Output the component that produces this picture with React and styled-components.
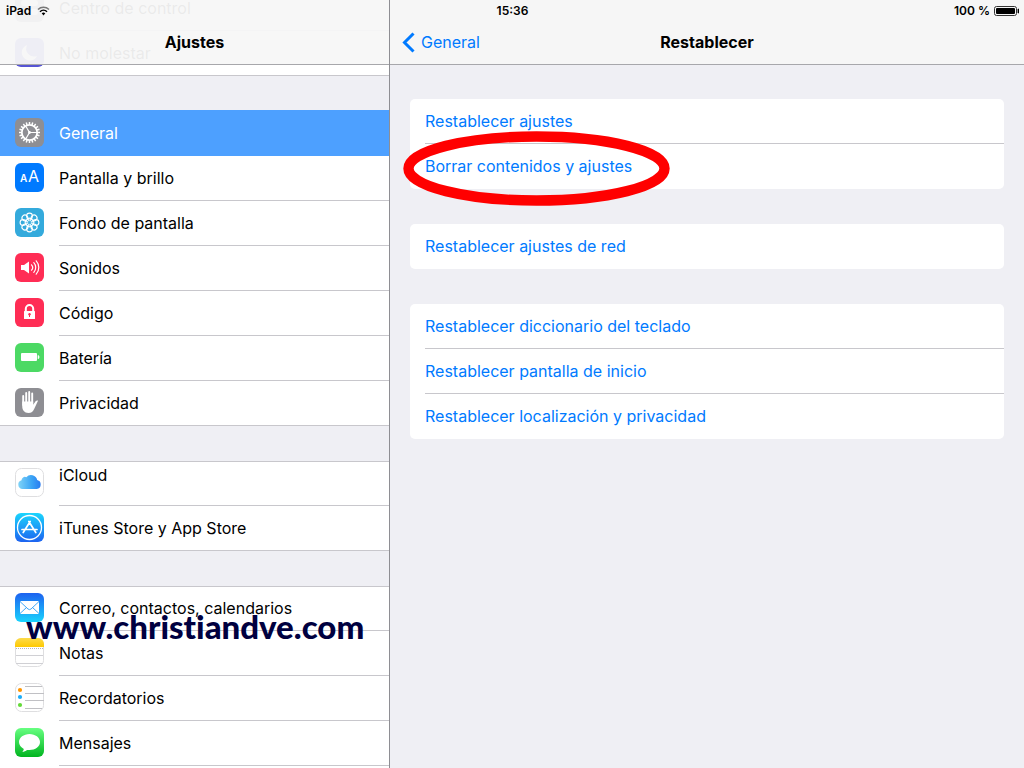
import React from 'react';
import styled, { createGlobalStyle, css } from 'styled-components';

const rootRows = [
  { id: 'control', label: 'Centro de control' },
  { id: 'dnd', label: 'No molestar' },
];

const generalRows = [
  { id: 'general', label: 'General', selected: true },
  { id: 'display', label: 'Pantalla y brillo' },
  { id: 'wallpaper', label: 'Fondo de pantalla' },
  { id: 'sounds', label: 'Sonidos' },
  { id: 'passcode', label: 'Código' },
  { id: 'battery', label: 'Batería' },
  { id: 'privacy', label: 'Privacidad' },
];

const storeRows = [
  { id: 'icloud', label: 'iCloud', raised: true },
  { id: 'appstore', label: 'iTunes Store y App Store' },
];

const appRows = [
  { id: 'mail', label: 'Correo, contactos, calendarios' },
  { id: 'notes', label: 'Notas' },
  { id: 'reminders', label: 'Recordatorios' },
  { id: 'messages', label: 'Mensajes' },
];

const sidebarGroups = [
  { rows: rootRows },
  { rows: generalRows },
  { rows: storeRows },
  { rows: appRows, open: true },
];

const resetGroups = [
  [{ label: 'Restablecer ajustes' }, { label: 'Borrar contenidos y ajustes', marked: true }],
  [{ label: 'Restablecer ajustes de red' }],
  [
    { label: 'Restablecer diccionario del teclado' },
    { label: 'Restablecer pantalla de inicio' },
    { label: 'Restablecer localización y privacidad' },
  ],
];

const petals = [0, 45, 90, 135, 180, 225, 270, 315];
const teeth = Array.from({ length: 20 }, (_, i) => i * 18);

const glyphs = {
  control: (
    <>
      <rect width="29" height="29" rx="6" fill="#8e8e93" />
      <rect x="6" y="7" width="17" height="6" rx="3" fill="#fff" />
      <rect x="6" y="16" width="17" height="6" rx="3" fill="#fff" />
    </>
  ),
  dnd: (
    <>
      <rect width="29" height="29" rx="6" fill="#5654d4" />
      <path d="M12 7a8 8 0 1 0 10 11A8 8 0 0 1 12 7z" fill="#fff" />
    </>
  ),
  general: (
    <>
      <rect width="29" height="29" rx="6" fill="#8e8e93" />
      <circle cx="14.5" cy="14.5" r="7.7" fill="none" stroke="#fff" strokeWidth="1.8" />
      {teeth.map((a) => (
        <path key={a} d="M14.5 4v2.6" stroke="#fff" strokeWidth="1.5" transform={`rotate(${a} 14.5 14.5)`} />
      ))}
      <path d="M14.5 14.5h7.5M14.5 14.5l-3.8-6.5M14.5 14.5l-3.8 6.5" stroke="#fff" strokeWidth="1.2" />
      <circle cx="14.5" cy="14.5" r="1.4" fill="#fff" />
    </>
  ),
  display: (
    <>
      <rect width="29" height="29" rx="6" fill="#007aff" />
      <text x="5" y="19" fill="#fff" fontSize="10" fontWeight="600" fontFamily="Inter, sans-serif">A</text>
      <text x="13" y="19" fill="#fff" fontSize="16" fontWeight="400" fontFamily="Inter, sans-serif">A</text>
    </>
  ),
  wallpaper: (
    <>
      <rect width="29" height="29" rx="6" fill="#34aadc" />
      <g fill="none" stroke="#fff" strokeWidth="1.1">
        {petals.map((a) => (
          <circle key={a} cx="14.5" cy="8" r="2.9" transform={`rotate(${a} 14.5 14.5)`} />
        ))}
        {petals.map((a) => (
          <circle key={a} cx="14.5" cy="11.3" r="1.4" strokeWidth="0.7" transform={`rotate(${a} 14.5 14.5)`} />
        ))}
      </g>
    </>
  ),
  sounds: (
    <>
      <rect width="29" height="29" rx="6" fill="#ff2d55" />
      <path d="M6 12h3l5-3.500v12L9 17H6z" fill="#fff" />
      <g fill="none" stroke="#fff" strokeWidth="1.2" strokeLinecap="round">
        <path d="M16.5 11.800a4 4 0 0 1 0 5.400" />
        <path d="M18.800 9.700a7 7 0 0 1 0 9.600" />
        <path d="M21.200 7.800a10 10 0 0 1 0 13.400" />
      </g>
    </>
  ),
  passcode: (
    <>
      <rect width="29" height="29" rx="6" fill="#ff2d55" />
      <path d="M10.800 14v-3.300a3.700 3.700 0 0 1 7.400 0V14" fill="none" stroke="#fff" strokeWidth="2" />
      <rect x="9" y="13" width="11" height="8" rx="0.5" fill="#fff" />
      <circle cx="14.5" cy="16.2" r="1.2" fill="#ff2d55" />
      <path d="M14.500 16v3" stroke="#ff2d55" strokeWidth="1" />
    </>
  ),
  battery: (
    <>
      <rect width="29" height="29" rx="6" fill="#4cd964" />
      <rect x="6" y="10" width="16" height="8" rx="1" fill="#fff" />
      <path d="M23 12.300a2 2 0 0 1 0 3.600z" fill="#fff" stroke="#fff" strokeWidth="0.6" />
    </>
  ),
  privacy: (
    <>
      <rect width="29" height="29" rx="6" fill="#8e8e93" />
      <g stroke="#fff" strokeLinecap="round" strokeWidth="1.9" fill="none">
        <path d="M8.200 8v9M11.200 5v10M14.200 4v11M17.200 5.500v10" />
      </g>
      <path d="M7.250 13.500H18.200v3.200l2.600-3.600c.8-.9 2-.8 2.200-.3l-3.600 7.600c-1.300 2.900-3 4.600-5.900 4.600-4.200 0-6.250-3-6.250-6.500z" fill="#fff" />
    </>
  ),
  icloud: (
    <>
      <defs>
        <linearGradient id="cloud" x1="0" y1="0" x2="1" y2="0">
          <stop offset="0" stopColor="#7fd3f7" />
          <stop offset="0.6" stopColor="#3ba4f5" />
          <stop offset="1" stopColor="#2a7bf0" />
        </linearGradient>
      </defs>
      <rect x="0.5" y="0.5" width="28" height="28" rx="6" fill="#fff" stroke="#dedee0" />
      <path
        d="M7.500 21a4.500 4.500 0 0 1-1-8.800 3.400 3.400 0 0 1 4.800-3A6.300 6.300 0 0 1 22.200 12 4.600 4.600 0 0 1 21.800 21z"
        fill="url(#cloud)"
      />
    </>
  ),
  appstore: (
    <>
      <defs>
        <linearGradient id="store" x1="0" y1="0" x2="0" y2="1">
          <stop offset="0" stopColor="#1ad5fd" />
          <stop offset="1" stopColor="#1d63f0" />
        </linearGradient>
      </defs>
      <rect width="29" height="29" rx="6" fill="url(#store)" />
      <circle cx="14.5" cy="14.5" r="12" fill="none" stroke="#fff" strokeWidth="1.3" />
      <g stroke="#fff" strokeWidth="1.7" strokeLinecap="round" fill="none">
        <path d="M13.800 8.500l7 11M15.200 8.500l-7 11M7 16.500h15" />
      </g>
    </>
  ),
  mail: (
    <>
      <defs>
        <linearGradient id="mail" x1="0" y1="0" x2="0" y2="1">
          <stop offset="0" stopColor="#1d62f0" />
          <stop offset="1" stopColor="#19d3fd" />
        </linearGradient>
      </defs>
      <rect width="29" height="29" rx="6" fill="url(#mail)" />
      <rect x="5" y="8" width="19" height="13" rx="1" fill="#fff" />
      <path d="M5 8.500l8 7.500q1.500 1.300 3 0l8-7.500M5 20.500l6.500-6M24 20.500l-6.500-6" fill="none" stroke="#2a9df5" strokeWidth="0.9" />
    </>
  ),
  notes: (
    <>
      <defs>
        <linearGradient id="notes" x1="0" y1="0" x2="0" y2="1">
          <stop offset="0" stopColor="#fddb4a" />
          <stop offset="1" stopColor="#fec901" />
        </linearGradient>
      </defs>
      <rect x="0.5" y="0.5" width="28" height="28" rx="6" fill="#fff" stroke="#dedee0" />
      <path d="M0 9V6a6 6 0 0 1 6-6h17a6 6 0 0 1 6 6v3z" fill="url(#notes)" />
      <path d="M1 10.500h27" stroke="#b5b5b5" strokeDasharray="1 1" />
      <path d="M1 17.500h27M1 25.500h27" stroke="#d0d0d4" />
    </>
  ),
  reminders: (
    <>
      <rect x="0.5" y="0.5" width="28" height="28" rx="6" fill="#fff" stroke="#dedee0" />
      <path d="M10 3.500h17M10 10.500h19M10 17.500h19M10 25.500h17" stroke="#c0c0c4" />
      <circle cx="5" cy="7" r="2.1" fill="#ff9500" />
      <circle cx="5" cy="14" r="2.1" fill="#1badf8" />
      <circle cx="5" cy="22" r="2.1" fill="#63da38" />
    </>
  ),
  messages: (
    <>
      <defs>
        <linearGradient id="messages" x1="0" y1="0" x2="0" y2="1">
          <stop offset="0" stopColor="#67ff81" />
          <stop offset="1" stopColor="#01b41f" />
        </linearGradient>
      </defs>
      <rect width="29" height="29" rx="6" fill="url(#messages)" />
      <path d="M14.500 6C8.700 6 4 9.600 4 14.100c0 2.900 1.900 5.400 4.800 6.900-.1 1-.6 2-1.500 2.800 1.900-.1 3.500-.8 4.700-1.900.8.200 1.700.2 2.500.2 5.800 0 10.500-3.500 10.500-8S20.300 6 14.500 6z" fill="#fff" />
    </>
  ),
};

const App = () => {
  return (
    <>
      <GlobalStyle />
      <Screen>
        <StatusBar>
          <Carrier>
            iPad
            <svg width="13" height="10" viewBox="0 0 13 10" aria-hidden="true">
              <g fill="none" stroke="#000" strokeWidth="1.5">
                <path d="M1 3.500a8 8 0 0 1 11 0" stroke="#777" />
                <path d="M3 5.700a5 5 0 0 1 7 0" />
              </g>
              <path d="M4.700 7.300a2.600 2.600 0 0 1 3.600 0L6.500 9.500z" />
            </svg>
          </Carrier>
          <time>15:36</time>
          <Charge>
            100 %
            <svg width="25" height="10" viewBox="0 0 25 10" aria-hidden="true">
              <rect x="0.5" y="0.5" width="22" height="9" rx="2" fill="none" stroke="#333" />
              <rect x="2" y="2" width="19" height="6" rx="1" />
              <path d="M24 3a2 2 0 0 1 0 4z" stroke="#000" strokeWidth="0.8" />
            </svg>
          </Charge>
        </StatusBar>

        <Sidebar>
          <SidebarBar>
            <Title>Ajustes</Title>
          </SidebarBar>
          <List>
            {sidebarGroups.map(({ rows, open }) => (
              <Group key={rows[0].id} $open={open}>
                {rows.map(({ id, label, selected, raised }) => (
                  <Row key={id} href={`#${id}`} $selected={selected}>
                    <AppIcon viewBox="0 0 29 29" aria-hidden="true">{glyphs[id]}</AppIcon>
                    <RowLabel $raised={raised}>{label}</RowLabel>
                  </Row>
                ))}
              </Group>
            ))}
          </List>
          <Watermark>www.christiandve.com</Watermark>
        </Sidebar>

        <Detail>
          <DetailBar>
            <Back href="#general">
              <svg width="13" height="21" viewBox="0 0 13 21" aria-hidden="true">
                <path d="M11.500 1.500l-9 9 9 9" fill="none" stroke="#007aff" strokeWidth="3" />
              </svg>
              General
            </Back>
            <Title>Restablecer</Title>
          </DetailBar>
          <Cards>
            {resetGroups.map((actions) => (
              <Card key={actions[0].label}>
                {actions.map(({ label, marked }) => (
                  <Action key={label} type="button">
                    <ActionLabel>{label}</ActionLabel>
                    {marked && (
                      <Marker viewBox="0 0 267 75" aria-hidden="true">
                        <ellipse cx="133.5" cy="37.5" rx="128" ry="32" fill="none" stroke="#f00" strokeWidth="10.4" />
                      </Marker>
                    )}
                  </Action>
                ))}
              </Card>
            ))}
          </Cards>
        </Detail>
      </Screen>
    </>
  );
};

const GlobalStyle = createGlobalStyle`
  * {
    box-sizing: border-box;
  }

  body {
    margin: 0;
    font-family: Inter, 'Liberation Sans', sans-serif;
    font-size: 16px;
    color: #000;
    background: #efeff4;
  }
`;

const Screen = styled.div`
  position: relative;
  display: flex;
  height: 100vh;
  overflow: hidden;
`;

const StatusBar = styled.header`
  position: absolute;
  top: 0;
  left: 0;
  right: 0;
  z-index: 2;
  display: grid;
  grid-template-columns: 1fr auto 1fr;
  align-items: center;
  padding: 0 5px 0 6px;
  font-size: 12px;
  font-weight: 600;
  line-height: 21px;
`;

const Carrier = styled.span`
  display: flex;
  align-items: center;
  gap: 6px;
`;

const Charge = styled.span`
  display: flex;
  align-items: center;
  justify-content: flex-end;
  gap: 4px;
`;

const Sidebar = styled.aside`
  position: relative;
  flex: 0 0 390px;
  overflow: hidden;
  border-right: 1px solid #8e8e93;
`;

const NavBar = styled.div`
  height: 65px;
  padding-top: 20px;
  border-bottom: 1px solid #a7a7ab;
`;

const SidebarBar = styled(NavBar)`
  position: relative;
  z-index: 1;
  background: rgba(247, 247, 247, 0.95);
`;

const Title = styled.h1`
  margin: 0;
  font-size: 16px;
  font-weight: 700;
  line-height: 44px;
  text-align: center;
`;

const List = styled.nav`
  display: flex;
  flex-direction: column;
  gap: 35px;
  margin-top: -79px;
`;

const RowLabel = styled.span`
  display: flex;
  flex: 1;
  align-items: center;
  padding-bottom: ${({ $raised }) => ($raised ? '16px' : '0')};
  border-bottom: 1px solid #c8c7cc;
`;

const Row = styled.a`
  display: flex;
  gap: 15px;
  height: 45px;
  padding-left: 15px;
  color: inherit;
  text-decoration: none;

  ${({ $selected }) =>
    $selected &&
    css`
      color: #fff;
      background: #4da0ff;
      box-shadow: 0 -1px 0 #4da0ff;

      ${RowLabel} {
        border-color: #4da0ff;
      }
    `}
`;

/* the top hairline lies inside the first row, so every row keeps the same height */
const Group = styled.div`
  display: flex;
  flex-direction: column;
  padding-bottom: ${({ $open }) => ($open ? '45px' : '0')};
  background: linear-gradient(#c8c7cc, #c8c7cc) top / 100% 1px no-repeat #fff;

  ${({ $open }) =>
    !$open &&
    css`
      ${Row}:last-child {
        border-bottom: 1px solid #c8c7cc;
      }

      ${Row}:last-child ${RowLabel} {
        border-bottom: none;
      }
    `}
`;

const AppIcon = styled.svg`
  flex: none;
  width: 29px;
  height: 29px;
  margin-top: 7px;
`;

const Watermark = styled.div`
  position: absolute;
  left: 26px;
  top: 606px;
  font-family: Lato, 'Open Sans', sans-serif;
  font-size: 33px;
  font-weight: 900;
  font-variant-ligatures: none;
  line-height: 40px;
  color: #000040;
`;

const Detail = styled.main`
  flex: 1;
  min-width: 0;
`;

const DetailBar = styled(NavBar)`
  position: relative;
  background: #f6f6f6;
`;

const Back = styled.a`
  position: absolute;
  left: 12px;
  display: flex;
  align-items: center;
  gap: 6px;
  height: 44px;
  color: #007aff;
  text-decoration: none;
`;

const Cards = styled.div`
  display: flex;
  flex-direction: column;
  gap: 35px;
  padding: 34px 20px;
`;

const Card = styled.section`
  border-radius: 5px;
  background: #fff;
`;

const ActionLabel = styled.span`
  flex: 1;
  line-height: 44px;
  border-bottom: 1px solid #c8c7cc;
`;

const Action = styled.button`
  position: relative;
  display: flex;
  width: 100%;
  height: 45px;
  padding: 0 0 0 15px;
  border: none;
  background: none;
  color: #007aff;
  font: inherit;
  text-align: left;

  &:last-child ${ActionLabel} {
    border-color: transparent;
  }
`;

/* hand-drawn ring around the highlighted action */
const Marker = styled.svg`
  position: absolute;
  top: -13px;
  left: -7px;
  width: 267px;
  height: 75px;
  pointer-events: none;
`;

export default App;
